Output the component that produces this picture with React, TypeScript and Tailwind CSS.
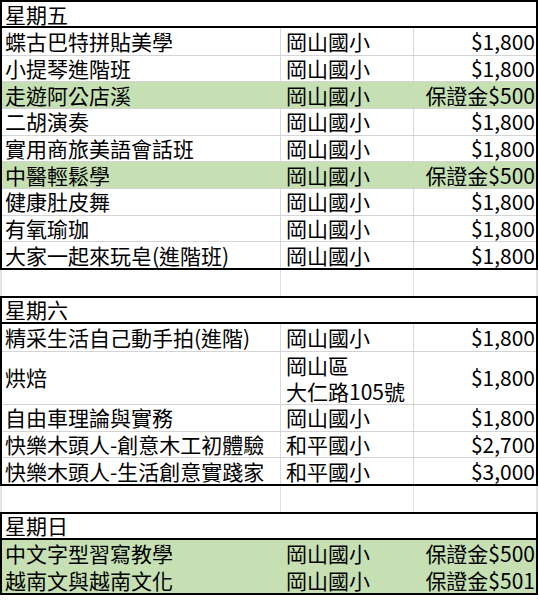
import React from 'react';

type Course = {
  name: string;
  place: string | string[];
  price: string;
  green?: boolean;
  tall?: boolean;
};

const friday: Course[] = [
  { name: '蝶古巴特拼貼美學', place: '岡山國小', price: '$1,800' },
  { name: '小提琴進階班', place: '岡山國小', price: '$1,800' },
  { name: '走遊阿公店溪', place: '岡山國小', price: '保證金$500', green: true },
  { name: '二胡演奏', place: '岡山國小', price: '$1,800' },
  { name: '實用商旅美語會話班', place: '岡山國小', price: '$1,800' },
  { name: '中醫輕鬆學', place: '岡山國小', price: '保證金$500', green: true },
  { name: '健康肚皮舞', place: '岡山國小', price: '$1,800' },
  { name: '有氧瑜珈', place: '岡山國小', price: '$1,800' },
  { name: '大家一起來玩皂(進階班)', place: '岡山國小', price: '$1,800' },
];

const saturday: Course[] = [
  { name: '精采生活自己動手拍(進階)', place: '岡山國小', price: '$1,800' },
  { name: '烘焙', place: ['岡山區', '大仁路105號'], price: '$1,800', tall: true },
  { name: '自由車理論與實務', place: '岡山國小', price: '$1,800' },
  { name: '快樂木頭人-創意木工初體驗', place: '和平國小', price: '$2,700' },
  { name: '快樂木頭人-生活創意實踐家', place: '和平國小', price: '$3,000' },
];

const sunday: Course[] = [
  { name: '中文字型習寫教學', place: '岡山國小', price: '保證金$500', green: true },
  { name: '越南文與越南文化', place: '岡山國小', price: '保證金$501', green: true },
];

const Row: React.FC<{ course: Course; first: boolean; prevGreen: boolean }> = ({ course, first, prevGreen }) => {
  const lineColor = course.green && prevGreen ? 'border-t-[#c6e0b4]' : 'border-t-[#d4d4d4]';
  const colLine = course.green ? 'border-r-[#c6e0b4]' : 'border-r-[#d9d9d9]';
  return (
    <div
      className={`grid grid-cols-[279px_133px_1fr] ${course.tall ? 'h-[53.34px]' : 'h-[26.67px]'} ${
        first ? '' : `border-t ${lineColor}`
      } ${course.green ? 'bg-[#c6e0b4]' : 'bg-white'}`}
    >
      <div className={`flex items-center pl-[3px] border-r ${colLine} whitespace-nowrap`}>
        <span className="leading-[25px]">{course.name}</span>
      </div>
      <div className={`flex flex-col justify-center pl-[5px] border-r ${colLine} whitespace-nowrap`}>
        {Array.isArray(course.place) ? (
          course.place.map((p) => (
            <span key={p} className="leading-[26px]">
              {p}
            </span>
          ))
        ) : (
          <span className="leading-[25px]">{course.place}</span>
        )}
      </div>
      <div className="flex items-center justify-end pr-[1px] whitespace-nowrap">
        <span className="leading-[25px]">{course.price}</span>
      </div>
    </div>
  );
};

const Section: React.FC<{ title: string; courses: Course[] }> = ({ title, courses }) => (
  <div className="w-[538px] border-2 border-black">
    <div className="h-[26px] flex items-center pl-[3px] border-b-2 border-black">
      <span className="leading-[25px]">{title}</span>
    </div>
    {courses.map((c, i) => (
      <Row key={c.name} course={c} first={i === 0} prevGreen={i > 0 && !!courses[i - 1].green} />
    ))}
  </div>
);

const Spacer: React.FC = () => (
  <div className="w-[538px] h-[26px] grid grid-cols-[279px_133px_1fr] border-x-2 border-[#e3e3e3]">
    <div className="border-r border-[#e3e3e3]" />
    <div className="border-r border-[#e3e3e3]" />
    <div />
  </div>
);

export default function App() {
  return (
    <div className="w-[539px] h-[600px] overflow-hidden bg-white text-black text-[21px] font-['Noto_Sans_CJK_TC','Noto_Sans',sans-serif]">
      <Section title="星期五" courses={friday} />
      <Spacer />
      <Section title="星期六" courses={saturday} />
      <Spacer />
      <Section title="星期日" courses={sunday} />
    </div>
  );
}
